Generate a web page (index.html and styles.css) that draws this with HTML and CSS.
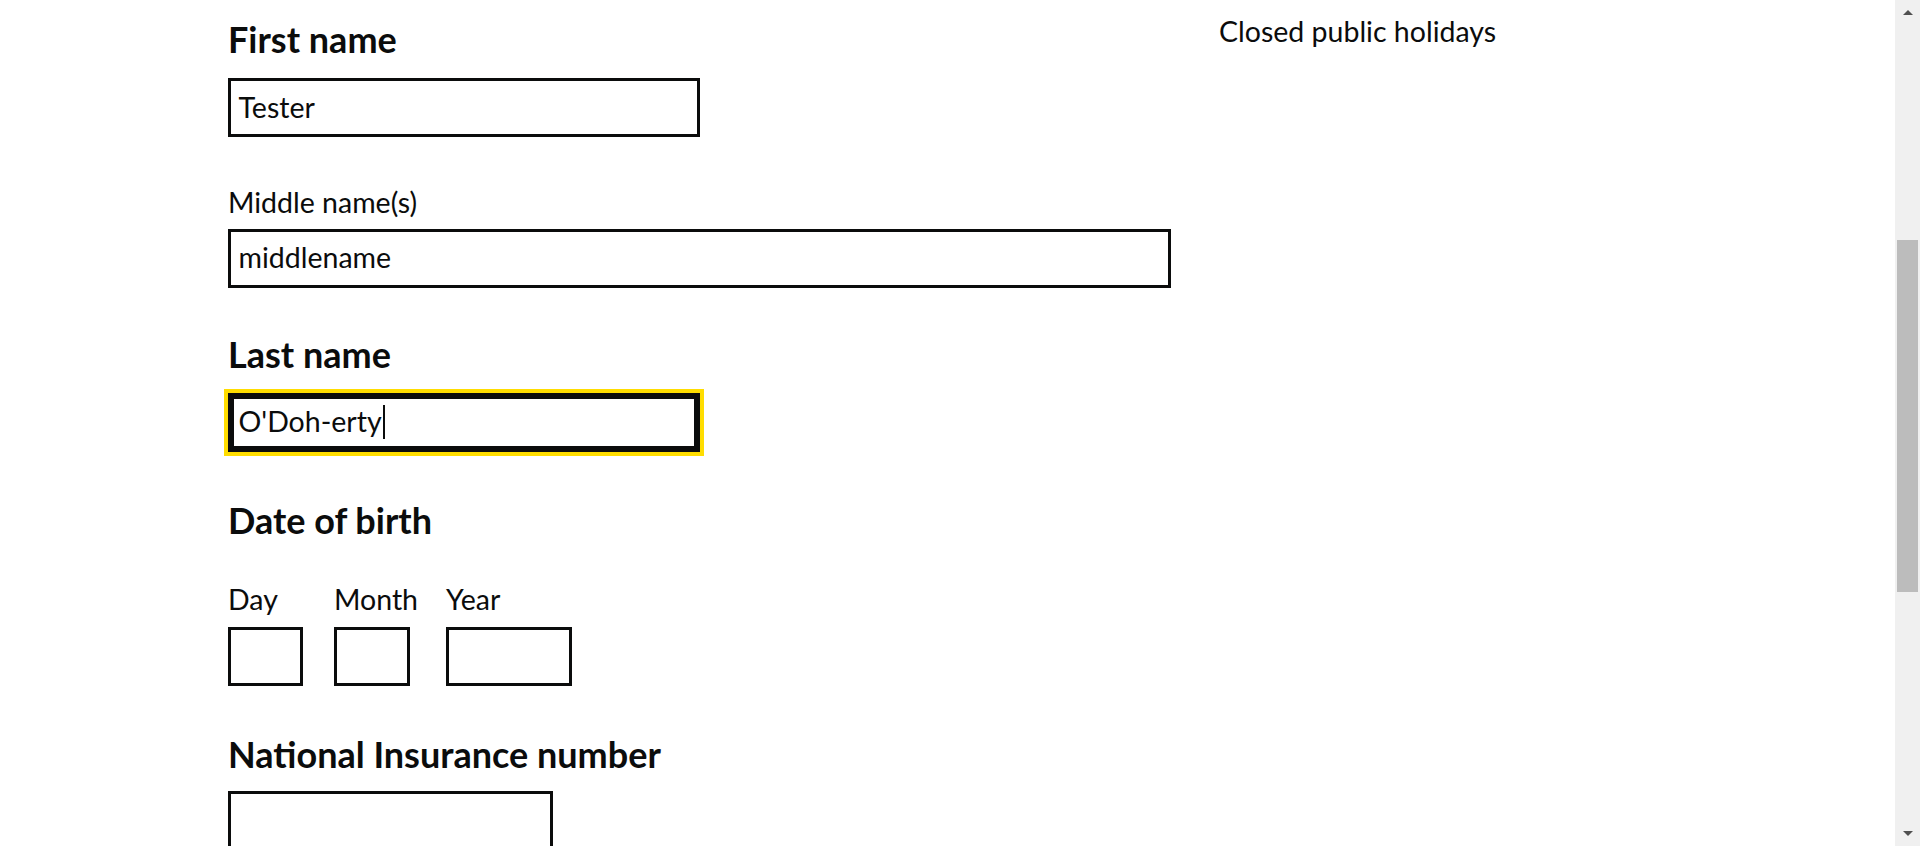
FILE: index.html
```html
<!DOCTYPE html>
<html lang="en">
<head>
<meta charset="utf-8">
<title>Your details</title>
<link rel="stylesheet" href="styles.css">
</head>
<body>
<div class="page">
  <main class="main">
    <div class="form">
      <div class="group">
        <div class="heading">First name</div>
        <div class="input input--20">Tester</div>
      </div>
      <div class="group">
        <div class="label label--gap">Middle name(s)</div>
        <div class="input input--full">middlename</div>
      </div>
      <div class="group">
        <div class="heading">Last name</div>
        <div class="input input--20 input--focus">O'Doh-erty<span class="caret"></span></div>
      </div>
      <div class="group">
        <div class="heading heading--legend">Date of birth</div>
        <div class="date">
          <div class="date-item date-item--day">
            <div class="label label--date">Day</div>
            <div class="input input--day"></div>
          </div>
          <div class="date-item date-item--month">
            <div class="label label--date">Month</div>
            <div class="input input--month"></div>
          </div>
          <div class="date-item">
            <div class="label label--date">Year</div>
            <div class="input input--year"></div>
          </div>
        </div>
      </div>
      <div class="group">
        <div class="heading heading--low">National Insurance number</div>
        <div class="input input--ni"></div>
      </div>
    </div>
    <aside class="aside">Closed public holidays</aside>
  </main>
  <div class="scrollbar">
    <div class="scroll-btn"><span class="arrow-up"></span></div>
    <div class="scroll-thumb"></div>
    <div class="scroll-space"></div>
    <div class="scroll-btn"><span class="arrow-down"></span></div>
  </div>
</div>
</body>
</html>
```
FILE: styles.css
```css
html, body {
  margin: 0;
  padding: 0;
  background: #ffffff;
}
body {
  font-family: Lato, "Liberation Sans", Arial, sans-serif;
  color: #0b0c0c;
  overflow: hidden;
}
.page {
  display: flex;
  height: 846px;
  overflow: hidden;
}
.main {
  flex: 1;
  display: flex;
  gap: 48px;
  padding-left: 228px;
}
.form {
  width: 943px;
  padding-top: 17px;
  flex: none;
}
.aside {
  padding-top: 12.5px;
  font-size: 28.5px;
  line-height: 37.5px;
}
.group {
  margin-bottom: 44px;
}
.heading {
  font-size: 36px;
  line-height: 45px;
  font-weight: 700;
  margin-bottom: 16px;
}
.heading--legend {
  padding-top: 2.5px;
  margin-bottom: 35px;
}
.heading--low {
  padding-top: 2.5px;
  margin-bottom: 13.5px;
}
.label {
  font-size: 28.5px;
  line-height: 37.5px;
  padding-top: 2.5px;
}
.label--gap {
  margin-bottom: 7.5px;
}
.label--date {
  margin-bottom: 8.5px;
}
.input {
  box-sizing: border-box;
  height: 59px;
  border: 3px solid #0b0c0c;
  padding: 0 7.5px;
  font-size: 28.5px;
  line-height: 37.5px;
  display: flex;
  align-items: center;
  background: #ffffff;
  white-space: nowrap;
}
.input--20 { width: 472px; }
.input--full { width: 943px; }
.input--day { width: 75px; }
.input--month { width: 76px; }
.input--year { width: 126px; }
.input--ni { width: 325px; }
.input--focus {
  outline: 4px solid #ffdd00;
  outline-offset: 0;
  box-shadow: inset 0 0 0 3px #0b0c0c;
}
.caret {
  display: inline-block;
  width: 2px;
  height: 34px;
  background: #0b0c0c;
  margin-left: 1px;
}
.date {
  display: flex;
}
.date-item--day { width: 106px; }
.date-item--month { width: 112px; }
.scrollbar {
  width: 25px;
  flex: none;
  background: #f0f0f0;
  display: flex;
  flex-direction: column;
  align-items: center;
}
.scroll-btn {
  height: 25px;
  width: 25px;
  display: flex;
  align-items: center;
  justify-content: center;
  flex: none;
}
.arrow-up {
  width: 0;
  height: 0;
  border-left: 5.5px solid transparent;
  border-right: 5.5px solid transparent;
  border-bottom: 5px solid #505050;
}
.arrow-down {
  width: 0;
  height: 0;
  border-left: 5.5px solid transparent;
  border-right: 5.5px solid transparent;
  border-top: 5px solid #505050;
}
.scroll-thumb {
  width: 21px;
  height: 352px;
  margin-top: 215px;
  background: #bcbcbc;
  flex: none;
}
.scroll-space {
  flex: 1;
}
```
